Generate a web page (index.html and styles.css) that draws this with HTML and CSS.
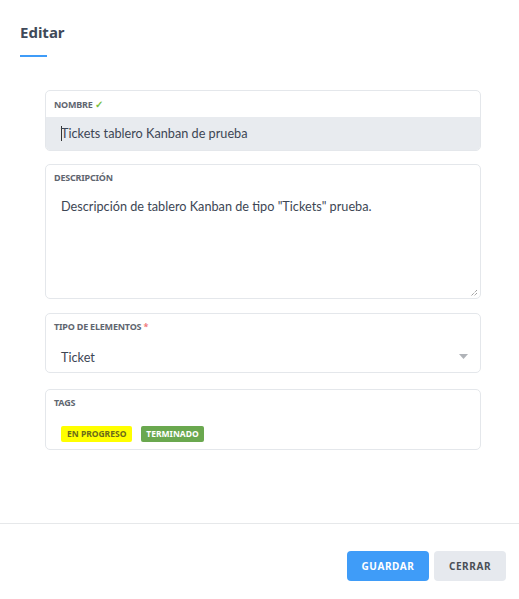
FILE: index.html
```html
<!DOCTYPE html>
<html lang="es">
<head>
<meta charset="utf-8">
<title>Editar</title>
<link rel="stylesheet" href="styles.css">
</head>
<body>
<div class="modal">
  <header class="modal-header">
    <h1 class="title">Editar</h1>
    <div class="title-bar"></div>
  </header>
  <main class="modal-body">
    <div class="field field-nombre">
      <div class="label">NOMBRE <span class="check">✓</span></div>
      <div class="input input-filled"><span class="caret"></span>Tickets tablero Kanban de prueba</div>
    </div>
    <div class="field field-desc">
      <div class="label">DESCRIPCIÓN</div>
      <div class="textarea">Descripción de tablero Kanban de tipo "Tickets" prueba.
        <svg class="resize" width="8" height="8" viewBox="0 0 8 8"><path d="M7 1L1 7M7 4L4 7" stroke="#777" stroke-width="1" stroke-dasharray="1 1"/></svg>
      </div>
    </div>
    <div class="field field-tipo">
      <div class="label">TIPO DE ELEMENTOS <span class="req">*</span></div>
      <div class="select">
        <span>Ticket</span>
        <svg class="arrow" width="9" height="5" viewBox="0 0 9 5"><path d="M0 0H9L4.5 5Z" fill="#b0b3b8"/></svg>
      </div>
    </div>
    <div class="field field-tags">
      <div class="label">TAGS</div>
      <div class="tags">
        <span class="tag tag-yellow">EN PROGRESO</span>
        <span class="tag tag-green">TERMINADO</span>
      </div>
    </div>
  </main>
  <footer class="modal-footer">
    <button class="btn btn-primary">GUARDAR</button>
    <button class="btn btn-secondary">CERRAR</button>
  </footer>
</div>
</body>
</html>
```
FILE: styles.css
```css
* { box-sizing: border-box; }
html, body { margin: 0; padding: 0; background: #fff; }
body {
  font-family: "Noto Sans", "Open Sans", sans-serif;
  color: #3d4654;
  width: 519px;
  height: 599px;
}
.modal { display: flex; flex-direction: column; height: 599px; }
.modal-header { padding: 22px 20px 0 20px; }
.title {
  margin: 0;
  font-size: 15px;
  font-weight: 700;
  line-height: 20px;
  color: #3f4a59;
}
.title-bar {
  margin-top: 13px;
  width: 27px;
  height: 2px;
  background: #3f9cf8;
}
.modal-body {
  padding: 33px 38px 0 45px;
  flex: 1;
}
.field {
  border: 1px solid #e4e7eb;
  border-radius: 5px;
  overflow: hidden;
}
.label {
  font-size: 9px;
  font-weight: 700;
  color: #5f6670;
  letter-spacing: -0.2px;
  padding: 7px 8px 0 8px;
  line-height: 12px;
  height: 26px;
}
.check { color: #7ac142; font-size: 10px; }
.req { color: #f0787a; }
.field-nombre { height: 61px; margin-bottom: 13px; }
.input {
  height: 34px;
  padding: 0 15px;
  font-family: "Lato", "Noto Sans", sans-serif;
  font-size: 12.7px;
  line-height: 33px;
  color: #3d4654;
  position: relative;
}
.input-filled { background: #e8ebef; }
.caret {
  display: inline-block;
  width: 1px;
  height: 15px;
  background: #333;
  vertical-align: -3px;
  margin-right: -1px;
}
.field-desc { height: 135px; margin-bottom: 14px; }
.textarea {
  position: relative;
  height: 108px;
  padding: 6px 15px;
  font-family: "Lato", "Noto Sans", sans-serif;
  font-size: 12.7px;
  line-height: 18px;
  color: #3d4654;
}
.resize { position: absolute; right: 2px; bottom: 2px; }
.field-tipo { height: 60px; margin-bottom: 16px; }
.select {
  display: flex;
  align-items: center;
  justify-content: space-between;
  height: 33px;
  padding: 0 12px 0 15px;
  font-family: "Lato", "Noto Sans", sans-serif;
  font-size: 12.7px;
  color: #3d4654;
}
.field-tags { height: 61px; }
.tags { display: flex; gap: 9px; padding: 10px 15px 0 15px; }
.tag {
  display: inline-block;
  height: 16px;
  line-height: 16px;
  font-size: 8.5px;
  font-weight: 700;
  padding: 0 5px;
  border-radius: 2px;
}
.tag-yellow { background: #ffff00; color: #6b6b1a; padding: 0 6px; }
.tag-green { background: #6aa84f; color: #fff; }
.modal-footer {
  border-top: 1px solid #e6e8ea;
  height: 76px;
  display: flex;
  justify-content: flex-end;
  align-items: flex-start;
  gap: 5px;
  padding: 27px 13px 0 0;
}
.btn {
  border: 0;
  border-radius: 4px;
  height: 30px;
  font-family: "Noto Sans", "Open Sans", sans-serif;
  font-weight: 700;
  font-size: 10px;
  letter-spacing: 0.6px;
  padding: 0;
}
.btn-primary { width: 82px; background: #3f9cf8; color: #fff; }
.btn-secondary { width: 72px; background: #e6e9ee; color: #4a4f56; }
```
